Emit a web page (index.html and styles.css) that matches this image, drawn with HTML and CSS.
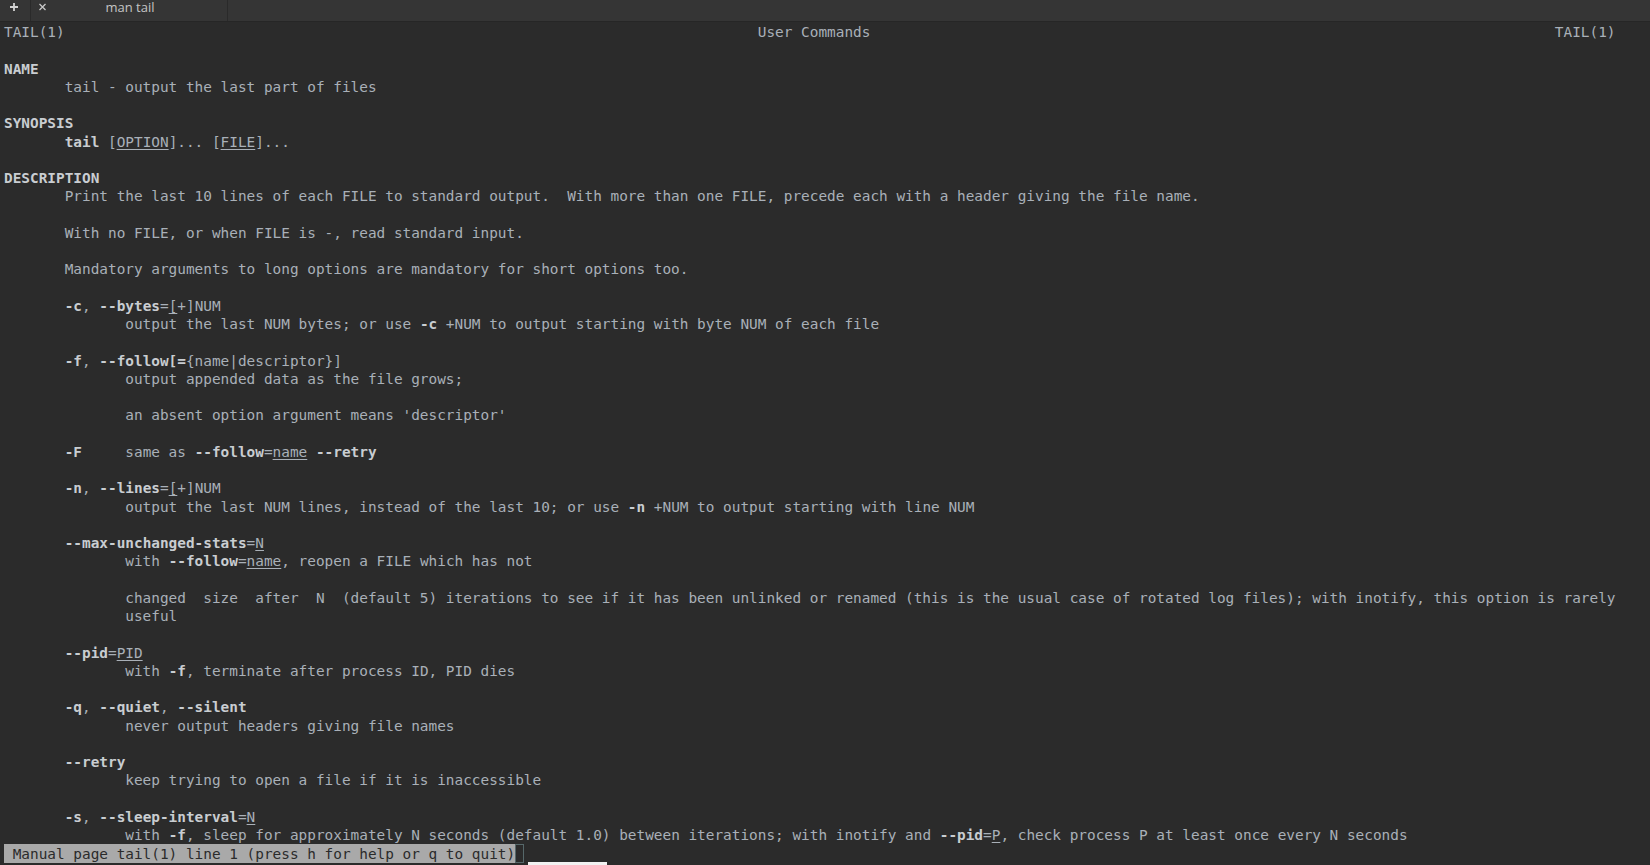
FILE: index.html
```html
<!DOCTYPE html>
<html lang="en">
<head>
  <meta charset="UTF-8">
  <meta name="viewport" content="width=device-width, initial-scale=1.0">
  <title>man tail</title>
  <link rel="stylesheet" href="styles.css">
</head>
<body>
  <div class="tabs">
    <a href="javascript:;" class="new-tab">
      <svg width="30" height="14" viewBox="0 0 30 14"><path d="M10 7h8M14 3v8" stroke="#d2d2d2" stroke-width="1.8" fill="none"/></svg>
    </a>
    <div class="tab">
      <a href="javascript:;" class="close-tab">
        <svg width="20" height="14" viewBox="0 0 20 14"><path d="M8.5 4l6 6M14.5 4l-6 6" stroke="#c8c8c8" stroke-width="1.3" fill="none"/></svg>
      </a>
      <span class="tab-title">man tail</span>
    </div>
  </div>
<pre class="screen">
TAIL(1)                                                                                User Commands                                                                               TAIL(1)

<b>NAME</b>
       tail - output the last part of files

<b>SYNOPSIS</b>
       <b>tail</b> [<u>OPTION</u>]... [<u>FILE</u>]...

<b>DESCRIPTION</b>
       Print the last 10 lines of each FILE to standard output.  With more than one FILE, precede each with a header giving the file name.

       With no FILE, or when FILE is -, read standard input.

       Mandatory arguments to long options are mandatory for short options too.

       <b>-c</b>, <b>--bytes</b>=<u>[</u>+]NUM
              output the last NUM bytes; or use <b>-c</b> +NUM to output starting with byte NUM of each file

       <b>-f</b>, <b>--follow[=</b>{name|descriptor}]
              output appended data as the file grows;

              an absent option argument means 'descriptor'

       <b>-F</b>     same as <b>--follow</b>=<u>name</u> <b>--retry</b>

       <b>-n</b>, <b>--lines</b>=<u>[</u>+]NUM
              output the last NUM lines, instead of the last 10; or use <b>-n</b> +NUM to output starting with line NUM

       <b>--max-unchanged-stats</b>=<u>N</u>
              with <b>--follow</b>=<u>name</u>, reopen a FILE which has not

              changed  size  after  N  (default 5) iterations to see if it has been unlinked or renamed (this is the usual case of rotated log files); with inotify, this option is rarely
              useful

       <b>--pid</b>=<u>PID</u>
              with <b>-f</b>, terminate after process ID, PID dies

       <b>-q</b>, <b>--quiet</b>, <b>--silent</b>
              never output headers giving file names

       <b>--retry</b>
              keep trying to open a file if it is inaccessible

       <b>-s</b>, <b>--sleep-interval</b>=<u>N</u>
              with <b>-f</b>, sleep for approximately N seconds (default 1.0) between iterations; with inotify and <b>--pid</b>=<u>P</u>, check process P at least once every N seconds
<span class="prompt"> Manual page tail(1) line 1 (press h for help or q to quit)</span><span class="cursor"> </span></pre>
  <div class="ime"></div>
</body>
</html>
```
FILE: styles.css
```css
body {
  margin: 0;
  height: 100vh;
  overflow: hidden;
  background: #2b2b2b;
}
a {
  text-decoration: none;
  color: #d0d0d0;
}
.tabs {
  height: 21px;
  display: flex;
  background: #353535;
  border-bottom: 1px solid #262626;
  font: 13px/14px "Open Sans", sans-serif;
  color: #c4c4c4;
}
.new-tab {
  width: 30px;
  border-right: 1px solid #2a2a2a;
  display: flex;
}
.tab {
  width: 196px;
  border-right: 1px solid #2a2a2a;
  display: grid;
  grid-template-columns: 20px 1fr 18px;
}
.close-tab {
  display: flex;
}
.tab-title {
  text-align: center;
  cursor: default;
}
.screen {
  margin: 0;
  padding: 1px 0 0 4px;
  font: 14.4px/18.25px "DejaVu Sans Mono", monospace;
  color: #a9b0b8;
  white-space: pre;
}
.screen b {
  color: #c9cdd1;
}
.screen u {
  text-underline-offset: 2px;
}
.prompt {
  padding: 1.5px 0;
  background: #a9a9a9;
  color: #2b2b2b;
}
.cursor {
  padding: 1.5px 0;
  box-shadow: inset 0 0 0 1px #56686a;
}
.ime {
  position: absolute;
  left: 528px;
  top: 862px;
  width: 79px;
  height: 3px;
  background: #f2f2f2;
}
```
